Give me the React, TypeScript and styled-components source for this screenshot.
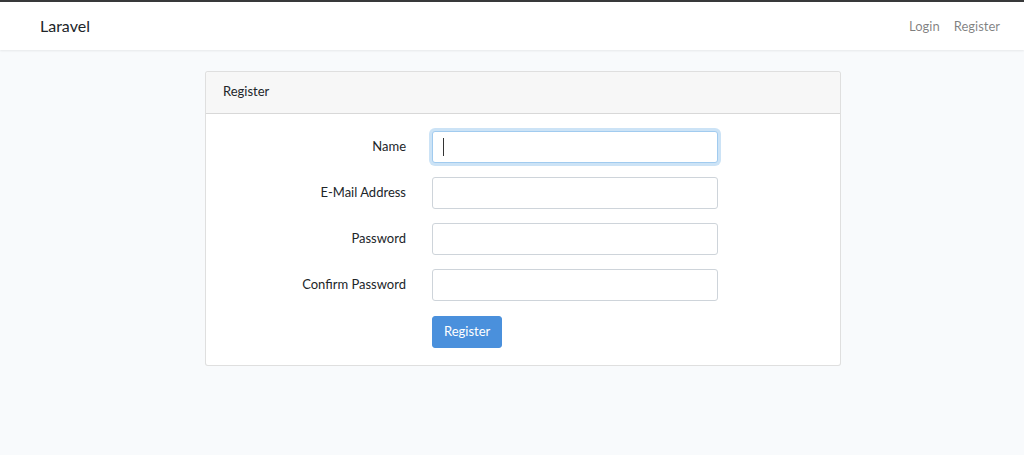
import React from "react";
import styled, { createGlobalStyle, css } from "styled-components";

const Global = createGlobalStyle`
  html, body { margin: 0; padding: 0; }
  body {
    background: #f8fafc;
    font-family: Lato, "Noto Sans", "Liberation Sans", sans-serif;
    font-size: 13px;
    color: #212529;
    min-height: 455px;
  }
  * { box-sizing: border-box; }
`;

const Navbar = styled.nav`
  height: 50px;
  border-top: 2px solid #38393a;
  background: #fff;
  box-shadow: 0 1px 2px rgba(0, 0, 0, 0.075);
  display: flex;
  align-items: center;
  justify-content: space-between;
  padding: 0 24px 0 40px;
`;

const Brand = styled.a`
  font-size: 16px;
  color: #212529;
  text-decoration: none;
  margin-top: -1px;
`;

const NavLinks = styled.div`
  display: flex;
  gap: 14px;
  margin-top: -1px;
`;

const NavLink = styled.a`
  color: rgba(0, 0, 0, 0.5);
  text-decoration: none;
  font-size: 13px;
`;

const Main = styled.main`
  padding: 21px 0 0 205px;
  display: flex;
`;

const Card = styled.div`
  width: 636px;
  background: #fff;
  border: 1px solid rgba(0, 0, 0, 0.125);
  border-radius: 3px;
`;

const CardHeader = styled.div`
  height: 42px;
  padding: 0 17px 3px;
  display: flex;
  align-items: center;
  background: #f7f7f7;
  border-bottom: 1px solid rgba(0, 0, 0, 0.125);
  border-radius: 3px 3px 0 0;
`;

const CardBody = styled.form`
  padding: 17px 17px 17px;
  display: flex;
  flex-direction: column;
  gap: 14px;
`;

const Row = styled.div`
  display: grid;
  grid-template-columns: 183px 286px;
  column-gap: 26px;
  align-items: center;
`;

const Label = styled.label`
  text-align: right;
  padding-bottom: 3px;
`;

const InputWrap = styled.div`
  position: relative;
`;

const Input = styled.input<{ $focus?: boolean }>`
  display: block;
  width: 286px;
  height: 32px;
  border: 1px solid #ced4da;
  border-radius: 3px;
  background: #fff;
  font: inherit;
  padding: 0 10px;
  outline: none;
  ${(p) =>
    p.$focus &&
    css`
      border-color: #a1cbef;
      box-shadow: 0 0 0 3px rgba(52, 144, 220, 0.25);
    `}
`;

const Caret = styled.span`
  position: absolute;
  left: 11px;
  top: 7px;
  width: 1px;
  height: 18px;
  background: #333;
`;

const Button = styled.button`
  grid-column: 2;
  justify-self: start;
  height: 32px;
  padding: 0 11px 2px;
  background: #4a90dc;
  border: 1px solid #4a90dc;
  border-radius: 3px;
  color: #fff;
  font: inherit;
  margin-top: 1px;
`;

const fields = [
  { label: "Name", type: "text", focus: true },
  { label: "E-Mail Address", type: "email" },
  { label: "Password", type: "password" },
  { label: "Confirm Password", type: "password" },
];

export default function App() {
  return (
    <>
      <Global />
      <Navbar>
        <Brand href="#">Laravel</Brand>
        <NavLinks>
          <NavLink href="#">Login</NavLink>
          <NavLink href="#">Register</NavLink>
        </NavLinks>
      </Navbar>
      <Main>
        <Card>
          <CardHeader>Register</CardHeader>
          <CardBody onSubmit={(e) => e.preventDefault()}>
            {fields.map((f) => (
              <Row key={f.label}>
                <Label>{f.label}</Label>
                <InputWrap>
                  <Input type={f.type} $focus={f.focus} readOnly />
                  {f.focus && <Caret />}
                </InputWrap>
              </Row>
            ))}
            <Row>
              <Button type="submit">Register</Button>
            </Row>
          </CardBody>
        </Card>
      </Main>
    </>
  );
}
